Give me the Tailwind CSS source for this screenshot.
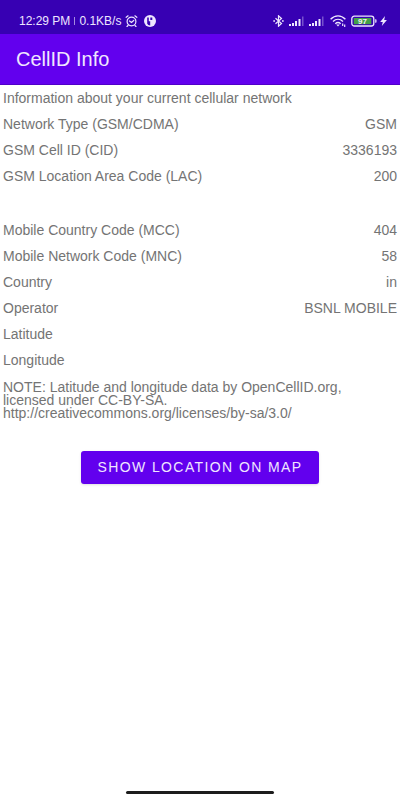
<!DOCTYPE html>
<html lang="en">
<head>
<meta charset="utf-8">
<meta name="viewport" content="width=device-width, initial-scale=1">
<title>CellID Info</title>
<script src="https://cdn.jsdelivr.net/npm/@tailwindcss/browser@4"></script>
</head>
<body class="min-h-screen flex flex-col bg-white text-[14px] leading-[18px] text-[#747474] font-['Liberation_Sans',Arial,sans-serif]">
  <div class="flex items-center justify-between bg-[#3700b3] h-[34px] pt-2 pl-[19px] pr-[13px] text-[12px] leading-4 text-[#eee6ff]">
    <div class="flex items-center">
      <span class="whitespace-nowrap">12:29 PM</span>
      <span class="w-px h-2 mx-1 bg-[#a58be0]"></span>
      <span class="whitespace-nowrap">0.1KB/s</span>
      <svg class="ml-1 w-[13px] h-3" viewBox="0 0 12 12" fill="none" stroke="currentColor" stroke-width="1.200" stroke-linecap="round" aria-hidden="true">
        <circle cx="6" cy="6.500" r="4.400"/><path d="M.7 2.300 2.600.8M11.300 2.300 9.400.8M4 6l2 1.500L8.200 5.500M2.500 10.500l-1 1M9.500 10.500l1 1"/>
      </svg>
      <svg class="ml-[6px] size-3" viewBox="0 0 12 12" aria-hidden="true">
        <circle cx="6" cy="6" r="6" fill="#eee6ff"/><path d="M3.200 2.400h1.600v3.800h1.400v4.200q-2.200 0-3-1.600zM6.300 2.400h2v2.600h-2z" fill="#3700b3"/>
      </svg>
    </div>
    <div class="flex items-center">
      <svg class="w-[11px] h-3" viewBox="0 0 11 12" fill="none" stroke="currentColor" aria-hidden="true">
        <path stroke-width="1.200" d="m2.500 3.300 6 5.200-3 2.700V.8l3 2.700-6 5.200"/><path d="M.3 6h1.700M9 6h1.700" stroke-width="1.600"/>
      </svg>
      <svg class="ml-[5px] w-[15px] h-3" viewBox="0 0 15 12" fill="currentColor" aria-hidden="true">
        <path d="M0 9h2v2H0zM3 8h2v3H3zM6 6h2v5H6zM9.500 4h2v7h-2z"/><path d="M13 1.500h1.500V11H13z" opacity=".35"/>
      </svg>
      <svg class="ml-[5px] w-[15px] h-3" viewBox="0 0 15 12" fill="currentColor" aria-hidden="true">
        <path d="M0 9h2v2H0zM3 8h2v3H3zM6 6h2v5H6zM9.500 4h2v7h-2z"/><path d="M13 1.500h1.500V11H13z" opacity=".35"/>
      </svg>
      <svg class="ml-[6px] w-4 h-3" viewBox="0 0 16 12" fill="none" stroke="currentColor" stroke-width="1.400" aria-hidden="true">
        <path d="M.6 4.200C5-.3 11-.3 15.400 4.200M3 6.600c3-3 7-3 10 0M5.300 8.800c1.500-1.400 3.900-1.400 5.400 0"/><path d="m6.200 9.600 1.800 2 1.800-2z" fill="currentColor" stroke="none"/><path d="M12.700 8.500V11M14.700 9.500V12" stroke-width="1.200"/>
      </svg>
      <svg class="ml-[5px] w-[26px] h-3" viewBox="0 0 26 12" aria-hidden="true">
        <rect x=".8" y="1.200" width="22" height="9.800" rx="2.500" fill="none" stroke="#eee6ff" stroke-width="1.300"/>
        <rect x="2.800" y="3" width="17.500" height="6.200" fill="#43a047"/>
        <path d="M24.200 4.300h.6q.7 0 .7.700v2q0 .7-.7.700h-.6z" fill="#eee6ff"/>
        <text x="11.500" y="9" text-anchor="middle" font-size="8" font-weight="700" fill="#f3f3f3">97</text>
      </svg>
      <svg class="ml-[3px] w-[7px] h-3" viewBox="0 0 7 12" fill="currentColor" aria-hidden="true"><path d="M5 1 .2 6.900h2.600L1.800 11 6.900 5H4.200z"/></svg>
    </div>
  </div>
  <header class="flex items-center h-[51px] px-4 bg-[#6200ee] border-b border-[#5000c8]">
    <h1 class="text-[20px] leading-6 text-[#f0e6ff]">CellID Info</h1>
  </header>
  <main class="px-[3px]">
    <p class="py-1">Information about your current cellular network</p>
    <table class="w-full">
      <tbody>
        <tr><th scope="row" class="py-1 text-left font-normal">Network Type (GSM/CDMA)</th><td class="py-1 text-right">GSM</td></tr>
        <tr><th scope="row" class="py-1 text-left font-normal">GSM Cell ID (CID)</th><td class="py-1 text-right">3336193</td></tr>
        <tr><th scope="row" class="py-1 text-left font-normal">GSM Location Area Code (LAC)</th><td class="py-1 text-right">200</td></tr>
      </tbody>
    </table>
    <table class="mt-7 w-full">
      <tbody>
        <tr><th scope="row" class="py-1 text-left font-normal">Mobile Country Code (MCC)</th><td class="py-1 text-right">404</td></tr>
        <tr><th scope="row" class="py-1 text-left font-normal">Mobile Network Code (MNC)</th><td class="py-1 text-right">58</td></tr>
        <tr><th scope="row" class="py-1 text-left font-normal">Country</th><td class="py-1 text-right">in</td></tr>
        <tr><th scope="row" class="py-1 text-left font-normal">Operator</th><td class="py-1 text-right">BSNL MOBILE</td></tr>
        <tr><th scope="row" class="py-1 text-left font-normal">Latitude</th><td></td></tr>
        <tr><th scope="row" class="py-1 text-left font-normal">Longitude</th><td></td></tr>
      </tbody>
    </table>
    <p class="mt-2 leading-[13px]">NOTE: Latitude and longitude data by OpenCellID.org,<br>licensed under CC-BY-SA.<br>http://creativecommons.org/licenses/by-sa/3.0/</p>
    <div class="mt-[31px] flex justify-center">
      <button type="button" class="rounded-[3px] bg-[#6200ee] px-4 py-2 text-[14px] leading-[17px] tracking-widest whitespace-nowrap text-[#f0e6ff] shadow-sm">SHOW LOCATION ON MAP</button>
    </div>
  </main>
  <div class="mt-auto flex justify-center pb-[6px]"><span class="h-[3px] w-[37%] rounded-full bg-[#1c1c1c]"></span></div>
</body>
</html>
